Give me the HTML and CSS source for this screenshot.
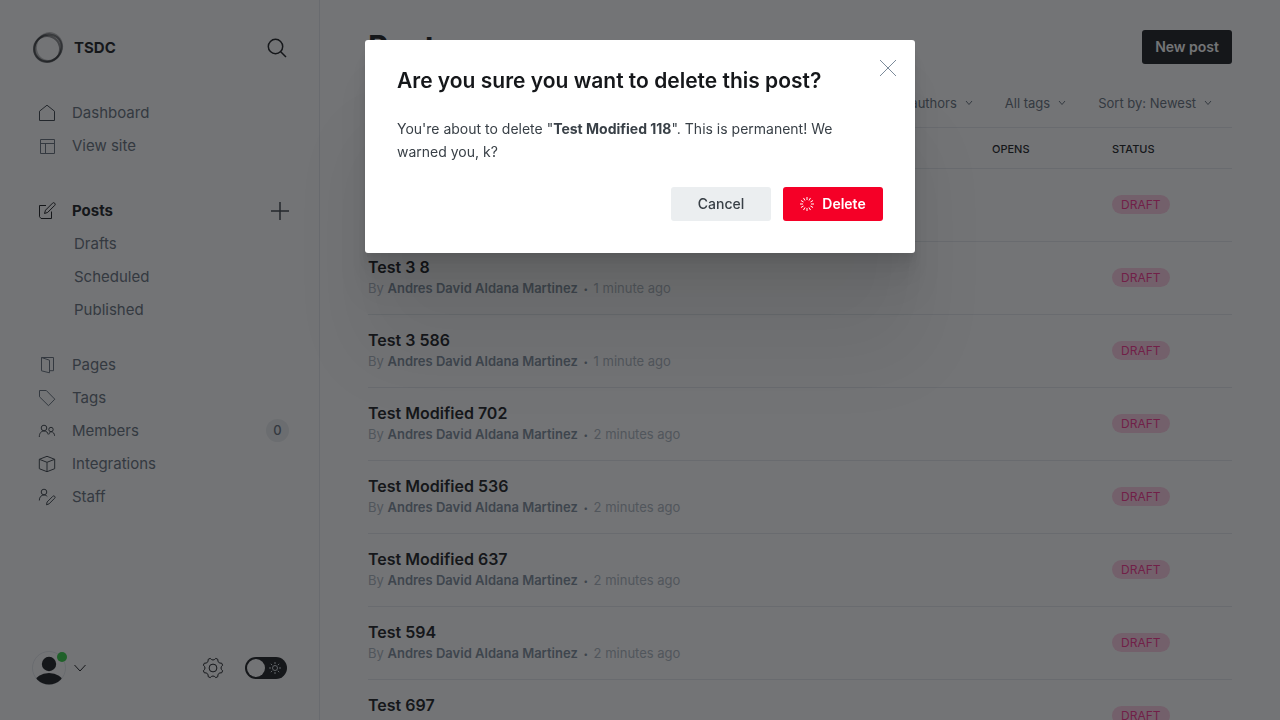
FILE: index.html
```html
<!DOCTYPE html>
<html lang="en">
<head>
<meta charset="utf-8">
<meta name="viewport" content="width=device-width, initial-scale=1">
<title>Posts - TSDC</title>
<link rel="stylesheet" href="styles.css">
</head>
<body>
<div class="app">
  <aside class="sidebar">
    <header class="site">
      <svg class="site-logo" viewBox="0 0 32 32" aria-hidden="true">
        <g fill="none" stroke="#15171a">
          <ellipse cx="16" cy="16" rx="14" ry="13" stroke-width="2" opacity=".4" transform="rotate(-38 16 16)"/>
          <ellipse cx="15" cy="17" rx="13" ry="13" stroke-width="2" opacity=".5"/>
          <ellipse cx="17" cy="15" rx="13" ry="14" stroke-width="2" opacity=".3" transform="rotate(20 17 15)"/>
          <ellipse cx="16" cy="16" rx="13" ry="14" stroke-width="2" opacity=".3" transform="rotate(50 16 16)"/>
        </g>
      </svg>
      <span class="site-name">TSDC</span>
      <button class="icon-button search" type="button" aria-label="Search">
        <svg viewBox="0 0 20 20"><circle cx="8.5" cy="8.5" r="7.2"/><path d="M13.7 13.7 19 19"/></svg>
      </button>
    </header>

    <nav class="nav">
      <ul class="nav-group">
        <li><a href="#"><svg viewBox="0 0 18 18"><path d="M1.5 7.2 9 1.2l7.500 6v9.300h-15z"/></svg>Dashboard</a></li>
        <li><a href="#"><svg class="thin" viewBox="0 0 18 18"><path d="M2.500 2.500h14v14h-14zM2.500 6.500h14M7.500 6.500v10"/></svg>View site</a></li>
      </ul>
      <ul class="nav-group posts">
        <li class="with-action">
          <a class="current" href="#"><svg viewBox="0 0 18 18"><path d="M8 3.500H1.500v11.200l1.500 1.800h10.500V9.500M6.500 11.500l1-3.300 7-7a1.500 1.500 0 0 1 2.200 2.200l-7 7z"/></svg>Posts</a>
          <button class="icon-button add" type="button" aria-label="New post"><svg viewBox="0 0 18 18"><path d="M9 0v18M0 9h18"/></svg></button>
        </li>
        <li class="sub"><a href="#">Drafts</a></li>
        <li class="sub"><a href="#">Scheduled</a></li>
        <li class="sub"><a href="#">Published</a></li>
      </ul>
      <ul class="nav-group">
        <li><a href="#"><svg class="thin" viewBox="0 0 18 18"><path d="M3.500 1.500v13.300l8 2V4.200zM3.500 1.500h12v13.200h-3.500"/></svg>Pages</a></li>
        <li><a href="#"><svg class="thin" viewBox="0 0 18 18"><path d="M1.500 1.500h6.800l8.500 8.700-6.300 6.500L1.500 7.800z"/></svg>Tags</a></li>
        <li><a href="#"><svg viewBox="0 0 18 18"><circle cx="6" cy="6" r="2.800"/><circle cx="13" cy="7.500" r="2.200"/><path d="M1.300 15c0-4 2-6 4.700-6s3.700 1.500 4.200 3.500M11 12.300c.5-1.800 1-2.500 2.200-2.500 2 0 3.200 1.700 3.400 4"/></svg>Members<span class="count">0</span></a></li>
        <li><a href="#"><svg viewBox="0 0 18 18"><path d="m9 1.300 7.700 3v9.400l-7.700 3-7.700-3V4.300zM1.300 4.300 9 7.300l7.700-3M9 7.300v9.400"/></svg>Integrations</a></li>
        <li><a href="#"><svg viewBox="0 0 18 18"><circle cx="6" cy="4" r="2.800"/><path d="M1.300 12.500c0-3.500 2-5.500 4.700-5.500 1.300 0 2.500.5 3.300 1.500M8.500 16.800l.6-2.800 5.700-5.700a1.300 1.300 0 0 1 1.900 1.900L11 15.900z"/></svg>Staff</a></li>
      </ul>
    </nav>

    <footer class="sidebar-footer">
      <button class="account" type="button" aria-label="Account">
        <span class="avatar">
          <svg viewBox="0 0 34 34" aria-hidden="true">
            <clipPath id="face"><circle cx="17" cy="17" r="16.500"/></clipPath>
            <circle class="ring" cx="17" cy="17" r="16.500"/>
            <g clip-path="url(#face)"><circle cx="17" cy="13" r="7.200"/><ellipse cx="17" cy="31" rx="14" ry="9"/></g>
          </svg>
          <span class="status-dot"></span>
        </span>
        <svg class="chevron" viewBox="0 0 12 8"><path d="m.5 1 5.500 6 5.500-6"/></svg>
      </button>
      <a class="settings" href="#" aria-label="Settings">
        <svg viewBox="0 0 22 22"><circle cx="11" cy="11" r="3.900"/><path d="M8.200 1.400Q11 4.600 13.800 1.400L15.800 2.300Q15.500 6.500 19.700 6.200L20.600 8.200Q17.400 11 20.600 13.800L19.700 15.800Q15.500 15.500 15.800 19.700L13.800 20.600Q11 17.400 8.200 20.600L6.200 19.700Q6.500 15.500 2.300 15.800L1.400 13.800Q4.600 11 1.400 8.200L2.300 6.200Q6.500 6.500 6.200 2.300Z" stroke-linejoin="round"/></svg>
      </a>
      <label class="night">
        <input type="checkbox" aria-label="Night mode">
        <svg viewBox="0 0 14 14" aria-hidden="true"><circle cx="7" cy="7" r="2.500"/><path d="M7 1v2M7 11v2M1 7h2M11 7h2M2.800 2.800l1.400 1.400M9.800 9.800l1.400 1.400M2.800 11.200l1.400-1.400M9.800 4.200l1.400-1.400"/></svg>
      </label>
    </footer>
  </aside>

  <main class="content">
    <header class="page-header">
      <h1>Posts</h1>
      <a class="new-post" href="#">New post</a>
    </header>
    <div class="filters">
      <button type="button">All authors<svg viewBox="0 0 8 6"><path d="m1 1 3 3.500L7 1"/></svg></button>
      <button type="button">All tags<svg viewBox="0 0 8 6"><path d="m1 1 3 3.500L7 1"/></svg></button>
      <button type="button">Sort by: Newest<svg viewBox="0 0 8 6"><path d="m1 1 3 3.500L7 1"/></svg></button>
    </div>
    <table class="posts-table">
      <thead><tr><th>Title</th><th class="narrow">Opens</th><th class="narrow">Status</th></tr></thead>
      <tbody>
        <tr><td><h3>Test Modified 118</h3><p>By <b>Andres David Aldana Martinez</b> <span class="dot">•</span> 1 minute ago</p></td><td></td><td><span class="draft">Draft</span></td></tr>
        <tr><td><h3>Test 3 8</h3><p>By <b>Andres David Aldana Martinez</b> <span class="dot">•</span> 1 minute ago</p></td><td></td><td><span class="draft">Draft</span></td></tr>
        <tr><td><h3>Test 3 586</h3><p>By <b>Andres David Aldana Martinez</b> <span class="dot">•</span> 1 minute ago</p></td><td></td><td><span class="draft">Draft</span></td></tr>
        <tr><td><h3>Test Modified 702</h3><p>By <b>Andres David Aldana Martinez</b> <span class="dot">•</span> 2 minutes ago</p></td><td></td><td><span class="draft">Draft</span></td></tr>
        <tr><td><h3>Test Modified 536</h3><p>By <b>Andres David Aldana Martinez</b> <span class="dot">•</span> 2 minutes ago</p></td><td></td><td><span class="draft">Draft</span></td></tr>
        <tr><td><h3>Test Modified 637</h3><p>By <b>Andres David Aldana Martinez</b> <span class="dot">•</span> 2 minutes ago</p></td><td></td><td><span class="draft">Draft</span></td></tr>
        <tr><td><h3>Test 594</h3><p>By <b>Andres David Aldana Martinez</b> <span class="dot">•</span> 2 minutes ago</p></td><td></td><td><span class="draft">Draft</span></td></tr>
        <tr><td><h3>Test 697</h3><p>By <b>Andres David Aldana Martinez</b> <span class="dot">•</span> 2 minutes ago</p></td><td></td><td><span class="draft">Draft</span></td></tr>
      </tbody>
    </table>
  </main>
</div>

<div class="backdrop">
  <section class="modal" role="dialog" aria-modal="true" aria-labelledby="modal-title">
    <button class="close" type="button" aria-label="Close"><svg viewBox="0 0 16 16"><path d="m0 0 16 16M16 0 0 16"/></svg></button>
    <h2 id="modal-title">Are you sure you want to delete this post?</h2>
    <p>You're about to delete "<strong>Test Modified 118</strong>". This is permanent! We warned you, k?</p>
    <div class="modal-actions">
      <button class="cancel" type="button">Cancel</button>
      <button class="delete" type="button">
        <svg viewBox="0 0 14 14" aria-hidden="true"><path d="M7 0v3M7 11v3M0 7h3M11 7h3M3.500.94l1.500 2.600M9 10.460l1.500 2.600M.94 3.500l2.600 1.500M10.460 9l2.600 1.500M.94 10.500 3.540 9M10.460 5l2.600-1.500M3.500 13.060 5 10.460M9 3.540 10.500.94"/></svg>
        Delete
      </button>
    </div>
  </section>
</div>
</body>
</html>
```
FILE: styles.css
```css
* { box-sizing: border-box; }

body {
  margin: 0;
  color: #15171a;
  background: #fff;
  font: 14px/20px Inter, "Liberation Sans", sans-serif;
}

h1, h2, h3, p, ul { margin: 0; padding: 0; }
ul { list-style: none; }
a { color: inherit; text-decoration: none; }
button { border: 0; padding: 0; background: none; color: inherit; font: inherit; }
svg { display: block; fill: none; stroke: currentColor; flex: none; }

.app { display: flex; height: 100vh; overflow: hidden; }

/* Sidebar */
.sidebar {
  display: flex;
  flex-direction: column;
  flex: 0 0 320px;
  padding: 32px;
  border-right: 1px solid #e5e9ed;
}
.site { display: flex; align-items: center; height: 32px; }
.site-logo { width: 32px; height: 32px; }
.site-name { margin-left: 10px; font-size: 15px; font-weight: 700; }
.icon-button { display: flex; margin-left: auto; }
.search svg { width: 20px; height: 20px; stroke-width: 1.5; }
.nav { margin: 32px -2px 0 0; color: #626d79; }
.nav-group + .nav-group { margin-top: 32px; }
.nav-group.posts + .nav-group { margin-top: 22px; }
.nav a { display: flex; align-items: center; flex: 1; height: 33px; padding-left: 6px; font-size: 15px; }
.nav a svg { width: 18px; height: 18px; margin-right: 16px; stroke: #394047; }
.nav .thin { stroke: #626d79; }
.nav .sub a { padding-left: 42px; }
.nav .current { color: #15171a; font-weight: 700; }
.nav .current svg { stroke: #15171a; }
.with-action { display: flex; align-items: center; }
.add svg { width: 18px; height: 18px; stroke: #394047; stroke-width: 1.5; }
.count {
  margin-left: auto;
  min-width: 23px;
  border-radius: 12px;
  background: #ebeef0;
  font-size: 13px;
  font-weight: 500;
  line-height: 23px;
  text-align: center;
}
.sidebar-footer { display: flex; align-items: center; height: 40px; margin-top: auto; }
.account { display: flex; align-items: center; gap: 8px; }
.avatar { position: relative; width: 34px; height: 34px; }
.avatar svg { width: 34px; height: 34px; fill: #15171a; stroke: none; }
.avatar .ring { fill: none; stroke: #e5e9ed; }
.status-dot {
  position: absolute;
  top: 1px;
  right: -1px;
  width: 10px;
  height: 10px;
  border-radius: 50%;
  background: #30cf43;
}
.chevron { width: 12px; height: 8px; }
.settings { margin-left: auto; }
.settings svg { width: 22px; height: 22px; stroke: #15171a; }
.night { position: relative; margin-left: 21px; }
.night input {
  display: flex;
  align-items: center;
  appearance: none;
  width: 42px;
  height: 22px;
  margin: 0;
  padding: 2px;
  border-radius: 11px;
  background: #15171a;
}
.night input::before { content: ""; width: 18px; height: 18px; border-radius: 50%; background: #fff; }
.night svg { position: absolute; top: 4px; right: 5px; width: 14px; height: 14px; stroke: #ced4d9; }

/* Posts list */
.content { flex: 1; min-width: 0; padding: 30px 48px 0; }
.page-header { display: flex; align-items: center; justify-content: space-between; height: 34px; }
.page-header h1 { font-size: 31px; line-height: 34px; font-weight: 700; }
.new-post {
  padding: 0 13px;
  border-radius: 3px;
  background: #15171a;
  color: #fff;
  font-weight: 600;
  line-height: 34px;
}
.filters {
  display: flex;
  justify-content: flex-end;
  gap: 32px;
  padding: 29px 20px 14px 0;
  color: #626d79;
  font-size: 13px;
}
.filters button { display: flex; align-items: center; gap: 8px; }
.filters svg { width: 8px; height: 6px; }
.posts-table { width: 100%; table-layout: fixed; border-spacing: 0; border-top: 1px solid #e5e9ed; }
.posts-table th {
  height: 41px;
  padding: 2px 0 0;
  border-bottom: 1px solid #e5e9ed;
  font-size: 11px;
  font-weight: 500;
  text-align: left;
  text-transform: uppercase;
}
.posts-table .narrow { width: 120px; }
.posts-table td { height: 73px; padding: 0 0 2px; border-bottom: 1px solid #e5e9ed; }
.posts-table h3 { font-size: 16px; line-height: 22px; font-weight: 600; }
.posts-table p { color: #abb4be; font-size: 13px; line-height: 20px; }
.posts-table b { color: #7c8b9a; font-weight: 600; }
.posts-table .dot { padding: 0 2px; color: #7c8b9a; font-size: 8px; line-height: 8px; vertical-align: 1px; }
.draft {
  display: inline-block;
  padding: 0 9px;
  border-radius: 10px;
  background: #fecde3;
  color: #fb2d8d;
  font-size: 12px;
  line-height: 19px;
  text-transform: uppercase;
  vertical-align: middle;
}

/* Delete confirmation */
.backdrop {
  position: fixed;
  inset: 0;
  display: flex;
  align-items: flex-start;
  justify-content: center;
  padding: 40px 16px;
  background: rgba(21, 23, 26, .6);
}
.modal {
  position: relative;
  width: 100%;
  max-width: 550px;
  padding: 28px 32px 32px;
  border-radius: 3px;
  background: #fff;
  box-shadow:
    0 3px 2px rgba(0, 0, 0, .02),
    0 7px 5px rgba(0, 0, 0, .03),
    0 13px 10px rgba(0, 0, 0, .035),
    0 22px 18px rgba(0, 0, 0, .04),
    0 42px 33px rgba(0, 0, 0, .05),
    0 100px 80px rgba(0, 0, 0, .07);
}
.modal h2 { font-size: 21px; line-height: 26px; font-weight: 600; }
.modal p { margin-top: 23px; color: #394047; line-height: 23px; }
.close { position: absolute; top: 20px; right: 19px; }
.close svg { width: 16px; height: 16px; stroke: #7c8b9a; }
.modal-actions { display: flex; justify-content: flex-end; gap: 12px; margin-top: 24px; }
.modal-actions button {
  display: flex;
  align-items: center;
  justify-content: center;
  gap: 8px;
  width: 100px;
  height: 34px;
  border-radius: 3px;
}
.cancel { background: #ebeef0; color: #394047; font-weight: 500; }
.delete { background: #f50027; color: #fff; font-weight: 600; }
.delete svg { width: 14px; height: 14px; stroke-width: 1; }
```
